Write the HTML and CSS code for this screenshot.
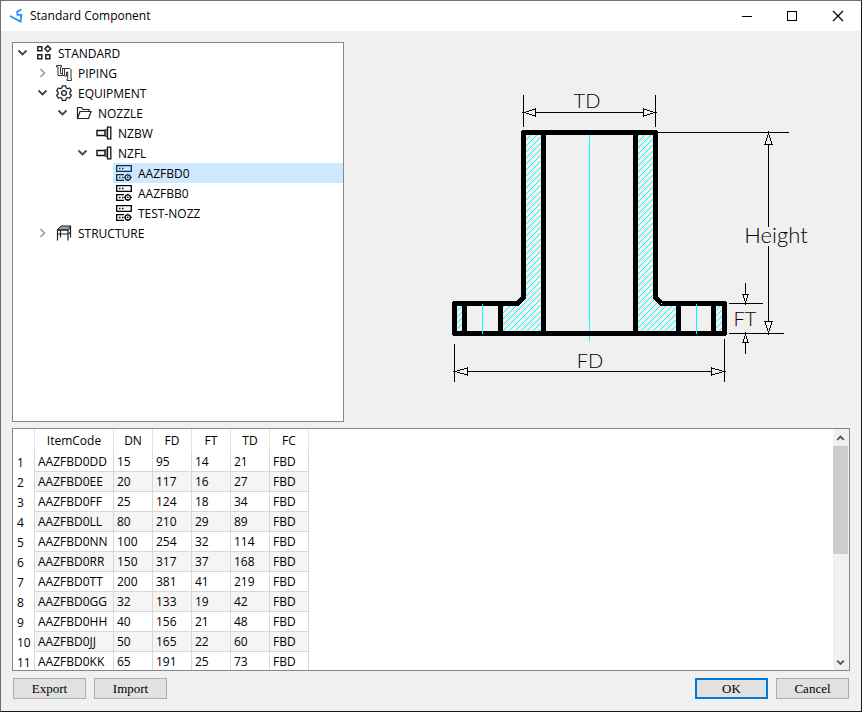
FILE: index.html
```html
<!DOCTYPE html>
<html lang="en">
<head>
<meta charset="utf-8">
<title>Standard Component</title>
<link rel="stylesheet" href="styles.css">
</head>
<body>
<svg class="defs" aria-hidden="true">
  <symbol id="open" viewBox="0 0 16 16"><path d="M3.500 5.500l4 4 4-4" fill="none" stroke="#444" stroke-width="1.800"/></symbol>
  <symbol id="closed" viewBox="0 0 16 16"><path d="M5.500 4l4 4-4 4" fill="none" stroke="#999" stroke-width="1.600"/></symbol>
  <symbol id="grid" viewBox="0 0 16 16"><g fill="none" stroke="#222" stroke-width="1.500"><path d="M1.800 1.800h4v4h-4zM1.800 9.800h4v4h-4zM9.800 9.800h4v4h-4zM11.800.9l2.900 2.900-2.900 2.900-2.900-2.900z"/></g></symbol>
  <symbol id="pipe" viewBox="0 0 16 16"><g fill="none" stroke="#333" stroke-width="1"><path d="M.5.5h5v1.500h-1v6.500h2v2h-4.500v-8.500h-1.500zM6.500 10.500h2v-7h-2.500M8.500 3.500h5.500l1 1v9.500h.5v1.500h-4.500v-1.500h.7v-7h-1.200v4h-2M6.500 3.500v5"/></g></symbol>
  <symbol id="gear" viewBox="0 0 16 16"><g fill="none" stroke="#222" stroke-width="1.300" stroke-linejoin="round"><path d="M6.300.8h3.400l.5 2.100 1.400.8 2.100-.7 1.600 2.900-1.500 1.500v1.400l1.500 1.500-1.600 2.900-2.100-.7-1.400.8-.5 2h-3.400l-.5-2-1.400-.8-2.100.7L.7 10.300l1.500-1.500V7.400L.7 5.900 2.300 3l2.100.7 1.400-.8z"/><circle cx="8" cy="8" r="2.400"/></g></symbol>
  <symbol id="folder" viewBox="0 0 16 16"><path d="M1.500 13.500v-11h4l1.500 2h6v2M1.500 13.500l2.500-7h11l-2.500 7z" fill="none" stroke="#222" stroke-width="1.200"/></symbol>
  <symbol id="nozzle" viewBox="0 0 16 16"><path d="M1 5.500h8v5H1z" fill="#fff" stroke="#111" stroke-width="1.400"/><path d="M9.500 4.500h2v7h-2z" fill="#aaa" stroke="#444"/><path d="M11.500 2.200h3.300v11.600h-3.300z" fill="#fff" stroke="#111" stroke-width="1.300"/></symbol>
  <symbol id="item" viewBox="0 0 16 16"><g fill="none" stroke="currentColor" stroke-width="1.300"><path d="M.7.7h14.600v5.600H.7zM8 9.700H.7v5.600H8"/><circle cx="11.800" cy="12.400" r="2.600"/><path d="M11.800 8.800v1M11.800 15v1M8.200 12.400h1M14.400 12.400h1.400M3 3.500h1.500M6 3.500h1.500M3 12.500h1.500M6 12.500h1.500"/></g><circle cx="11.800" cy="12.400" r=".8"/></symbol>
  <symbol id="frame" viewBox="0 0 16 16"><path d="M1 5l4-4h10l-2.500 4z" fill="#8da0b4" stroke="#222"/><path d="M1.500 5v10.500M4.500 5.500v7M12 5v10.500M14.500 1.500v11M1.500 9H12l2.500-1.500M1.500 5H12" fill="none" stroke="#222" stroke-width="1.200"/></symbol>
</svg>

<main class="window">
  <header class="titlebar">
    <svg class="logo" viewBox="0 0 16 16" aria-hidden="true"><path d="M1 8l10.500 5.500.8-6.700H8.500l-.3-3.300L12.500 1.500" fill="none" stroke="#2492f5" stroke-width="1.800"/></svg>
    <h1 class="title">Standard Component</h1>
    <button class="caption" type="button" aria-label="Minimize"><svg viewBox="0 0 12 12"><path d="M2 6.500h10"/></svg></button>
    <button class="caption" type="button" aria-label="Maximize"><svg viewBox="0 0 12 12"><path d="M1.500 1.500h9v9h-9z"/></svg></button>
    <button class="caption" type="button" aria-label="Close"><svg viewBox="0 0 12 12"><path class="smooth" d="M1 1l10 10M11 1L1 11"/></svg></button>
  </header>

  <div class="content">
    <section class="upper">
      <ul class="tree" role="tree" aria-label="Components">
        <li role="treeitem" aria-expanded="true">
          <div class="node"><svg class="arrow"><use href="#open"/></svg><svg class="icon"><use href="#grid"/></svg><span class="name">STANDARD</span></div>
          <ul role="group">
            <li role="treeitem" aria-expanded="false"><div class="node"><svg class="arrow"><use href="#closed"/></svg><svg class="icon"><use href="#pipe"/></svg><span class="name">PIPING</span></div></li>
            <li role="treeitem" aria-expanded="true">
              <div class="node"><svg class="arrow"><use href="#open"/></svg><svg class="icon"><use href="#gear"/></svg><span class="name">EQUIPMENT</span></div>
              <ul role="group">
                <li role="treeitem" aria-expanded="true">
                  <div class="node"><svg class="arrow"><use href="#open"/></svg><svg class="icon"><use href="#folder"/></svg><span class="name">NOZZLE</span></div>
                  <ul role="group">
                    <li role="treeitem"><div class="node"><span class="arrow"></span><svg class="icon"><use href="#nozzle"/></svg><span class="name">NZBW</span></div></li>
                    <li role="treeitem" aria-expanded="true">
                      <div class="node"><svg class="arrow"><use href="#open"/></svg><svg class="icon"><use href="#nozzle"/></svg><span class="name">NZFL</span></div>
                      <ul role="group">
                        <li role="treeitem" aria-selected="true"><div class="node leaf selected"><svg class="icon"><use href="#item"/></svg><span class="name">AAZFBD0</span></div></li>
                        <li role="treeitem"><div class="node leaf"><svg class="icon"><use href="#item"/></svg><span class="name">AAZFBB0</span></div></li>
                        <li role="treeitem"><div class="node leaf"><svg class="icon"><use href="#item"/></svg><span class="name">TEST-NOZZ</span></div></li>
                      </ul>
                    </li>
                  </ul>
                </li>
              </ul>
            </li>
            <li role="treeitem" aria-expanded="false"><div class="node"><svg class="arrow"><use href="#closed"/></svg><svg class="icon"><use href="#frame"/></svg><span class="name">STRUCTURE</span></div></li>
          </ul>
        </li>
      </ul>

      <svg class="drawing" viewBox="344 42 506 380" role="img" aria-label="Nozzle dimensions">
        <defs>
          <pattern id="hatch" width="6" height="6" patternUnits="userSpaceOnUse"><path d="M0 5h1v1H0zM1 4h1v1H1zM2 3h1v1H2zM3 2h1v1H3zM4 1h1v1H4zM5 0h1v1H5z" fill="#0ff"/></pattern>
        </defs>
        <path d="M526 135h15v196h-38v-25h16l7-8zM457 306h5v25h-5zM653 135h-15v196h38v-25h-15l-8-8zM716 306h6v25h-6z" fill="url(#hatch)"/>
        <path class="wall" d="M523.500 132.500h132v165l6 6h63v30h-270v-30h63l6-6zM543.500 133v200M635.500 133v200M464.500 304v29M500.500 304v29M678.500 304v29M713.500 304v29"/>
        <path class="axis" d="M589.500 135v196M589.500 336v5M482.500 304v30M696.500 304v30"/>
        <g class="dim">
          <path d="M523.500 95v32M655.500 95v32M535 112.500h108M658 132.500h131M768.500 144v83M768.500 246v75M729 303.500h34M729 333.500h55M745.500 283v12M745.500 343v11M454.500 344v38M724.500 339v43M467 371.500h245"/>
          <path d="M524 112.500l11.500-3.500v7zM655 112.500l-11.500-3.500v7zM768.500 133l-3.500 11.500h7zM768.500 333l-3.500-11.500h7zM745.500 303l-2.500-8.500h5zM745.500 334l-2.500 8.500h5zM455 371.500l12.500-3.500v7zM724 371.500l-12.500-3.500v7z"/>
        </g>
        <g class="label">
          <text x="587" y="108">TD</text>
          <text class="tall" x="776" y="243">Height</text>
          <text x="745" y="326">FT</text>
          <text x="590" y="368">FD</text>
        </g>
      </svg>
    </section>

    <section class="grid">
      <div class="sheet">
        <table>
          <thead><tr><th></th><th class="code">ItemCode</th><th>DN</th><th>FD</th><th>FT</th><th>TD</th><th>FC</th></tr></thead>
          <tbody>
            <tr><th>1</th><td>AAZFBD0DD</td><td>15</td><td>95</td><td>14</td><td>21</td><td>FBD</td></tr>
            <tr><th>2</th><td>AAZFBD0EE</td><td>20</td><td>117</td><td>16</td><td>27</td><td>FBD</td></tr>
            <tr><th>3</th><td>AAZFBD0FF</td><td>25</td><td>124</td><td>18</td><td>34</td><td>FBD</td></tr>
            <tr><th>4</th><td>AAZFBD0LL</td><td>80</td><td>210</td><td>29</td><td>89</td><td>FBD</td></tr>
            <tr><th>5</th><td>AAZFBD0NN</td><td>100</td><td>254</td><td>32</td><td>114</td><td>FBD</td></tr>
            <tr><th>6</th><td>AAZFBD0RR</td><td>150</td><td>317</td><td>37</td><td>168</td><td>FBD</td></tr>
            <tr><th>7</th><td>AAZFBD0TT</td><td>200</td><td>381</td><td>41</td><td>219</td><td>FBD</td></tr>
            <tr><th>8</th><td>AAZFBD0GG</td><td>32</td><td>133</td><td>19</td><td>42</td><td>FBD</td></tr>
            <tr><th>9</th><td>AAZFBD0HH</td><td>40</td><td>156</td><td>21</td><td>48</td><td>FBD</td></tr>
            <tr><th>10</th><td>AAZFBD0JJ</td><td>50</td><td>165</td><td>22</td><td>60</td><td>FBD</td></tr>
            <tr><th>11</th><td>AAZFBD0KK</td><td>65</td><td>191</td><td>25</td><td>73</td><td>FBD</td></tr>
          </tbody>
        </table>
      </div>
      <div class="scrollbar">
        <button type="button" aria-label="Scroll up"><svg viewBox="0 0 16 16"><path d="M4.500 10L8 6.500l3.500 3.500"/></svg></button>
        <div class="track"><div class="thumb"></div></div>
        <button type="button" aria-label="Scroll down"><svg viewBox="0 0 16 16"><path d="M4.500 6.500L8 10l3.500-3.500"/></svg></button>
      </div>
    </section>

    <footer class="actions">
      <button type="button">Export</button>
      <button type="button">Import</button>
      <span class="spacer"></span>
      <button type="button" class="default">OK</button>
      <button type="button">Cancel</button>
    </footer>
  </div>
</main>
</body>
</html>
```
FILE: styles.css
```css
* { box-sizing: border-box; }

body {
  margin: 0;
  font: 12px/20px "Open Sans", "Noto Sans", sans-serif;
  color: #000;
}

.defs { position: absolute; width: 0; height: 0; }

.window {
  display: flex;
  flex-direction: column;
  height: 100vh;
  border: 1px solid #1a1a1a;
  border-top-color: #706e70;
  border-left-color: #706e70;
  background: #f0f0f0;
}

.titlebar {
  display: flex;
  align-items: center;
  height: 30px;
  padding-left: 8px;
  background: #fff;
}
.logo { width: 16px; height: 16px; margin-right: 5px; }
.title { flex: 1; margin: 0; font-size: 12px; font-weight: 400; }
.caption {
  display: grid;
  place-items: center;
  width: 46px;
  height: 30px;
  padding: 0;
  border: 0;
  background: none;
}
.caption svg { width: 12px; height: 12px; }
.caption path { fill: none; stroke: #000; shape-rendering: crispEdges; }
.caption .smooth { shape-rendering: auto; stroke-width: 1.2; }

.content {
  flex: 1;
  min-height: 0;
  display: grid;
  grid-template-rows: 380fr 6px 243fr 7px 21px;
  padding: 11px 11px 12px;
}
.upper { display: flex; min-height: 0; grid-row: 1; }

.tree {
  flex: 0 0 332px;
  border: 1px solid #828790;
  background: #fff;
  overflow: hidden;
}
.tree, .tree ul { margin: 0; padding: 0; list-style: none; }
.tree ul { padding-left: 20px; }
.node { display: flex; align-items: center; height: 20px; }
.node .arrow { width: 16px; height: 16px; margin: 0 5px 0 2px; }
.node .icon { width: 16px; height: 16px; margin-right: 6px; }
.node .name { padding-top: 2px; }
.node.leaf { margin-left: 20px; padding-left: 3px; }
.node.selected { background: #cde8ff; }
.node.selected .icon { color: #0c2e4e; }

.drawing { flex: 1; min-width: 0; height: 100%; }
.drawing path { shape-rendering: crispEdges; }
.wall { fill: none; stroke: #000; stroke-width: 5; stroke-linejoin: round; }
.axis { fill: none; stroke: #0ff; }
.dim path { fill: none; stroke: #000; }
.label { font: 300 20px Lato, sans-serif; text-anchor: middle; }
.label .tall { font-size: 22px; }

.grid {
  grid-row: 3;
  display: flex;
  min-height: 0;
  border: 1px solid #828790;
  background: #fff;
}
.sheet { flex: 1; overflow: hidden; }
table { border-collapse: separate; border-spacing: 0; table-layout: fixed; width: 296px; }
th, td {
  height: 20px;
  padding: 0 0 0 3px;
  border-right: 1px solid #d8d8d8;
  font-weight: 400;
  line-height: 18px;
  text-align: left;
  white-space: nowrap;
}
td { border-bottom: 1px solid #d8d8d8; }
thead th { width: 39px; height: 23px; padding: 0; border-color: #e5e5e5; text-align: center; }
thead th:first-child { width: 22px; }
thead .code { width: 79px; }
tbody th { padding: 2px 0 0 4px; }
tbody tr:nth-child(even) td { background: #f5f5f5; }

.scrollbar { display: flex; flex-direction: column; width: 16px; background: #f0f0f0; }
.scrollbar button { height: 17px; padding: 0; border: 0; background: none; }
.scrollbar svg { display: block; width: 15px; height: 16px; }
.scrollbar path { fill: none; stroke: #555; stroke-width: 2; }
.track { flex: 1; }
.thumb { width: 15px; height: 52%; background: #cdcdcd; }

.actions { grid-row: 5; display: flex; gap: 8px; padding: 0 1px; }
.spacer { flex: 1; }
.actions button {
  width: 73px;
  padding: 0;
  border: 1px solid #adadad;
  background: #e1e1e1;
  font: 13px/18px "Liberation Serif", serif;
  color: #000;
}
.actions .default { border: 2px solid #0078d7; line-height: 16px; }
```
